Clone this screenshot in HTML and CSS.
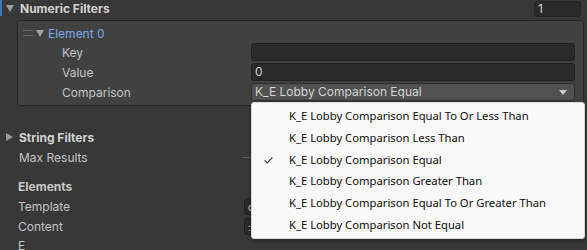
FILE: index.html
```html
<!DOCTYPE html>
<html>
<head>
<meta charset="utf-8">
<link rel="stylesheet" href="styles.css">
</head>
<body>
<div class="inspector">
  <div class="accent"></div>
  <div class="row head">
    <span class="tri down"></span>
    <span class="bold">Numeric Filters</span>
    <span class="spacer"></span>
    <div class="field count">1</div>
  </div>
  <div class="element-box">
    <div class="row elhead">
      <span class="handle"></span>
      <span class="tri down"></span>
      <span class="blue">Element 0</span>
    </div>
    <div class="row prop">
      <span class="label">Key</span>
      <div class="field wide"></div>
    </div>
    <div class="row prop">
      <span class="label">Value</span>
      <div class="field wide">0</div>
    </div>
    <div class="row prop">
      <span class="label">Comparison</span>
      <div class="field wide popup">K_E Lobby Comparison Equal<span class="caret"></span></div>
    </div>
  </div>
  <div class="row top-gap">
    <span class="tri right"></span>
    <span class="bold">String Filters</span>
  </div>
  <div class="row plain">
    <span class="label2">Max Results</span>
    <span class="slider-line"></span>
  </div>
  <div class="row plain section">
    <span class="bold sec">Elements</span>
  </div>
  <div class="row plain">
    <span class="label3">Template</span>
    <div class="field small">o</div>
  </div>
  <div class="row plain">
    <span class="label3">Content</span>
    <div class="field small">:</div>
  </div>
  <div class="row plain last">
    <span class="label3">E</span>
  </div>

  <div class="menu">
    <div class="item">K_E Lobby Comparison Equal To Or Less Than</div>
    <div class="item">K_E Lobby Comparison Less Than</div>
    <div class="item checked"><svg class="check" width="9" height="7" viewBox="0 0 9 7"><path d="M0.6 3.4 L3.2 6 L8.4 0.6" fill="none" stroke="#333" stroke-width="1.1"/></svg>K_E Lobby Comparison Equal</div>
    <div class="item">K_E Lobby Comparison Greater Than</div>
    <div class="item">K_E Lobby Comparison Equal To Or Greater Than</div>
    <div class="item">K_E Lobby Comparison Not Equal</div>
  </div>
</div>
</body>
</html>
```

FILE: styles.css
```css
html, body {
  margin: 0;
  padding: 0;
  background: #383838;
}
body {
  width: 587px;
  height: 250px;
  overflow: hidden;
  font-family: Inter, "Noto Sans", sans-serif;
  font-size: 12px;
  color: #c4c4c4;
}
.inspector {
  position: relative;
  width: 587px;
  height: 250px;
}
.accent {
  position: absolute;
  left: 0;
  top: 0;
  width: 2px;
  height: 16px;
  background: #3a79bb;
}
.row {
  display: flex;
  align-items: center;
  height: 20px;
}
.head {
  height: 17px;
  padding-left: 6px;
  padding-right: 6px;
}
.bold {
  font-weight: 700;
  color: #d2d2d2;
}
.spacer { flex: 1; }
.tri {
  display: inline-block;
  width: 0;
  height: 0;
  margin-right: 6px;
}
.tri.down {
  border-left: 4px solid transparent;
  border-right: 4px solid transparent;
  border-top: 7px solid #a0a0a0;
}
.tri.right {
  border-top: 4px solid transparent;
  border-bottom: 4px solid transparent;
  border-left: 7px solid #9a9a9a;
}
.field {
  box-sizing: border-box;
  height: 18px;
  background: #2a2a2a;
  border: 1px solid #212121;
  border-radius: 3px;
  color: #d2d2d2;
  padding-left: 3px;
  line-height: 16px;
}
.count {
  width: 47px;
  height: 16px;
  line-height: 14px;
  border-color: #232323;
}
.element-box {
  margin: 3px 3px 0 17px;
  height: 86px;
  box-sizing: border-box;
  background: #414141;
  border: 1px solid #262626;
  border-radius: 3px;
  padding-top: 3px;
}
.elhead {
  height: 18px;
  padding-left: 5px;
}
.handle {
  width: 10px;
  height: 4px;
  border-top: 1px solid #6a6a6a;
  border-bottom: 1px solid #6a6a6a;
  margin-right: 3px;
}
.elhead .tri { margin-right: 4px; }
.blue { color: #7aa6e6; }
.prop {
  padding-left: 44px;
}
.label {
  width: 189px;
}
.wide {
  width: 324px;
}
.popup {
  position: relative;
  background: #515151;
  border-color: #2e2e2e;
  color: #d4d4d4;
}
.caret {
  position: absolute;
  right: 7px;
  top: 6px;
  border-left: 4px solid transparent;
  border-right: 4px solid transparent;
  border-top: 5px solid #c8c8c8;
}
.top-gap {
  margin-top: 21px;
  height: 20px;
  padding-left: 6px;
}
.plain {
  padding-left: 19px;
  height: 20px;
}
.label2 { width: 224px; }
.slider-line {
  width: 10px;
  height: 1px;
  background: #5d5d5d;
}
.section {
  margin-top: 9px;
  padding-left: 18px;
}
.sec { color: #c8c8c8; }
.label3 {
  width: 226px;
}
.plain:has(.label3) { padding-left: 18px; }
.last { margin-top: -1px; }
.small {
  width: 20px;
  height: 17px;
  font-size: 10px;
}
.menu {
  position: absolute;
  left: 251px;
  top: 102px;
  width: 334px;
  height: 137px;
  box-sizing: border-box;
  background: #f9f9f9;
  border: 1px solid #d8d8d8;
  border-radius: 3px;
  box-shadow: 0 2px 4px rgba(0,0,0,0.35);
  padding-top: 2px;
  font-family: "Noto Sans", sans-serif;
  font-size: 11.25px;
  color: #0e0e0e;
}
.item {
  position: relative;
  height: 21.8px;
  line-height: 21.8px;
  padding-left: 37px;
  white-space: nowrap;
}
.check {
  position: absolute;
  left: 12px;
  top: 8px;
}
```
